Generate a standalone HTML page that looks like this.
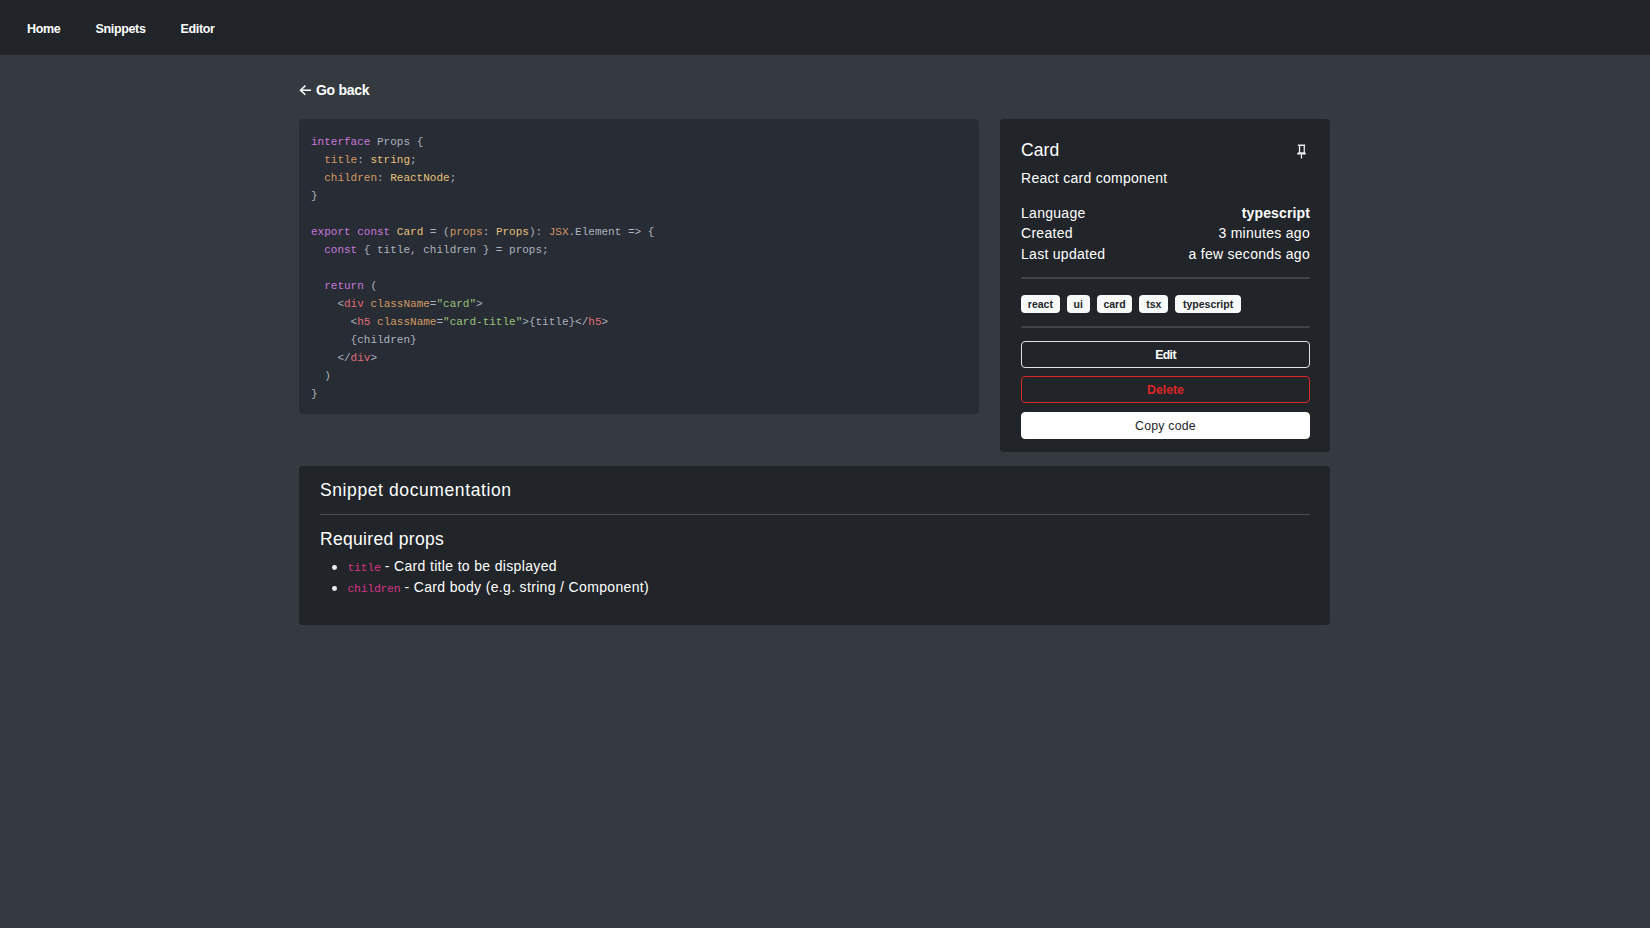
<!DOCTYPE html>
<html><head><meta charset="utf-8">
<style>
*{box-sizing:border-box;margin:0;padding:0}
html,body{width:1650px;height:928px;overflow:hidden}
body{background:#343a40;font-family:"Liberation Sans",sans-serif;color:#fff;position:relative;font-size:14px}
.abs{position:absolute;white-space:nowrap}
.nav{position:absolute;left:0;top:0;width:1650px;height:55px;background:#212529}
.nav a{position:absolute;top:21px;font-size:12.5px;font-weight:bold;color:#fff;text-decoration:none;line-height:16px;letter-spacing:-0.35px}
.back{position:absolute;left:299px;top:81px;font-size:14px;font-weight:bold;color:#fff;line-height:18px;white-space:nowrap}
.back svg{position:absolute;left:0;top:3px}
.back span{position:absolute;left:17px;top:0;letter-spacing:-0.3px}
.code{position:absolute;left:299px;top:119px;width:680px;height:294.5px;background:#282c34;border-radius:4px}
.code pre{position:absolute;left:12px;top:14px;font-family:"Liberation Mono",monospace;font-size:11px;line-height:18px;color:#abb2bf;white-space:pre}
.k{color:#c678dd}.y{color:#e6c07b}.o{color:#d19a66}.r{color:#e06c75}.g{color:#98c379}
.card{position:absolute;left:1000px;top:119px;width:330px;height:333px;background:#212529;border-radius:4px}
.doc{position:absolute;left:299px;top:466px;width:1031px;height:159px;background:#212529;border-radius:4px}
.h5{font-size:17.5px;line-height:21px;color:#fff}
.t14{font-size:14px;line-height:21px;color:#fff;letter-spacing:0.28px}
.hr{height:1px;background:#484b50}
.hr2{height:2px;background:#404348;border-radius:1px}
.tags span{display:inline-block;background:#f8f9fa;color:#212529;font-weight:bold;font-size:10.5px;line-height:10.5px;padding:3.5px 6.8px;border-radius:4px;margin-right:7px}
.btn{width:289px;height:27px;border:1px solid;border-radius:4px;text-align:center;font-size:12.25px;line-height:25px;padding-top:1px}
.li{font-size:14px;line-height:21px;color:#fff;letter-spacing:0.34px}
.li code{font-family:"Liberation Mono",monospace;font-size:11.5px;color:#d63384;letter-spacing:-0.3px;line-height:10px}
.bul{position:absolute;width:4.8px;height:4.8px;border-radius:50%;background:#e9ecef}
</style></head><body>
<div class="nav">
<a style="left:27px">Home</a>
<a style="left:95.5px">Snippets</a>
<a style="left:180.5px">Editor</a>
</div>
<div class="back"><svg width="13" height="13" viewBox="0 0 13 13"><path d="M6.4 1.6 L1.5 6.2 L6.4 10.8 M1.5 6.2 H12" stroke="#fff" stroke-width="1.5" fill="none"/></svg><span>Go back</span></div>
<div class="code"><pre><span class="k">interface</span> Props {
  <span class="o">title</span>: <span class="y">string</span>;
  <span class="o">children</span>: <span class="y">ReactNode</span>;
}

<span class="k">export</span> <span class="k">const</span> <span class="y">Card</span> = (<span class="o">props</span>: <span class="y">Props</span>): <span class="o">JSX</span>.Element =&gt; {
  <span class="k">const</span> { title, children } = props;

  <span class="k">return</span> (
    &lt;<span class="r">div</span> <span class="o">className</span>=<span class="g">"card"</span>&gt;
      &lt;<span class="r">h5</span> <span class="o">className</span>=<span class="g">"card-title"</span>&gt;{title}&lt;/<span class="r">h5</span>&gt;
      {children}
    &lt;/<span class="r">div</span>&gt;
  )
}</pre></div>
<div class="card">
<div class="abs h5" style="left:21px;top:20.5px;letter-spacing:0.1px">Card</div>
<svg class="abs" style="left:296px;top:24px" width="12" height="17" viewBox="0 0 12 17"><g fill="#eceef0"><rect x="1.9" y="1.5" width="7.3" height="1.5"/><rect x="2.9" y="2.5" width="1.3" height="8"/><rect x="7.6" y="2.5" width="1.3" height="8"/><path d="M2.9 9.3 H8.9 Q9.8 9.9 9.8 10.5 V11.5 H1.1 V10.5 Q1.1 9.9 2.9 9.3Z"/><rect x="4.8" y="11.3" width="1.3" height="4.2"/></g></svg>
<div class="abs t14" style="left:21px;top:48.7px">React card component</div>
<div class="abs t14" style="left:21px;top:83.5px">Language</div>
<div class="abs t14" style="right:20px;top:83.5px;font-weight:bold;letter-spacing:0.13px">typescript</div>
<div class="abs t14" style="left:21px;top:103.8px">Created</div>
<div class="abs t14" style="right:20px;top:103.8px">3 minutes ago</div>
<div class="abs t14" style="left:21px;top:124.5px">Last updated</div>
<div class="abs t14" style="right:20px;top:124.5px">a few seconds ago</div>
<div class="abs hr2" style="left:21px;top:158px;width:289px"></div>
<div class="abs tags" style="left:21px;top:175.5px"><span>react</span><span>ui</span><span>card</span><span>tsx</span><span style="padding:3.5px 7.8px">typescript</span></div>
<div class="abs hr2" style="left:21px;top:207px;width:289px"></div>
<div class="abs btn" style="left:21px;top:222px;border-color:#dee2e6;color:#fff;font-weight:bold;letter-spacing:-0.6px">Edit</div>
<div class="abs btn" style="left:21px;top:257px;border-color:#dc2626;color:#dc2626;font-weight:bold">Delete</div>
<div class="abs btn" style="left:21px;top:292.8px;border-color:#fff;background:#fff;color:#212529;letter-spacing:0.25px">Copy code</div>
</div>
<div class="doc">
<div class="abs h5" style="left:21px;top:13.5px;letter-spacing:0.6px">Snippet documentation</div>
<div class="abs hr" style="left:21px;top:48px;width:990px"></div>
<div class="abs h5" style="left:21px;top:62.5px;letter-spacing:0.32px">Required props</div>
<div class="bul" style="left:33.2px;top:99.1px"></div>
<div class="abs li" style="left:48.5px;top:90.3px"><code>title</code> - Card title to be displayed</div>
<div class="bul" style="left:33.2px;top:119.9px"></div>
<div class="abs li" style="left:48.5px;top:110.7px"><code>children</code> - Card body (e.g. string / Component)</div>
</div>
</body></html>
